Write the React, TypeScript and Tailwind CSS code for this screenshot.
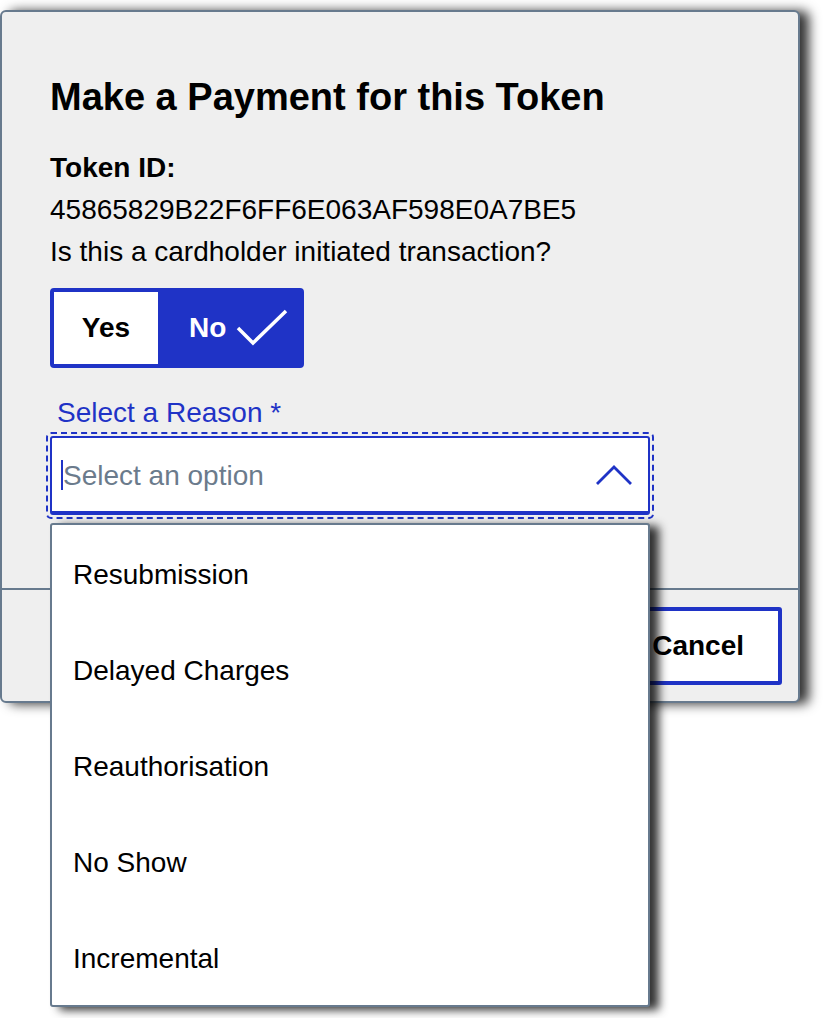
const reasons = ['Resubmission', 'Delayed Charges', 'Reauthorisation', 'No Show', 'Incremental']

const Check = () => (
  <svg width="52" height="38" viewBox="0 0 52 38" fill="none" className="ml-[10px]">
    <path d="M2 19 L17 34 L50 2" stroke="white" strokeWidth="3.5" />
  </svg>
)

const ChevronUp = () => (
  <svg width="38" height="22" viewBox="0 0 38 22" fill="none">
    <path d="M2 20 L19 3 L36 20" stroke="#1f33c6" strokeWidth="2.8" />
  </svg>
)

export default function App() {
  return (
    <div className="min-h-screen bg-white font-['Liberation_Sans',Arial,sans-serif] text-black">
      <div className="pt-[10px] w-[800px]">
        <div className="relative rounded-[6px] border-2 border-[#677a8e] bg-[#efefef] shadow-[9px_1px_12px_rgba(0,0,0,0.8)]">
          <div className="px-[48px] pt-[63px] pb-[69px]">
            <h2 className="text-[38px] font-bold leading-[44px]">Make a Payment for this Token</h2>
            <p className="mt-[28px] text-[28px] font-bold leading-[42px]">Token ID:</p>
            <p className="text-[28px] leading-[42px]">45865829B22F6FF6E063AF598E0A7BE5</p>
            <p className="text-[28px] leading-[42px]">Is this a cardholder initiated transaction?</p>

            <div className="mt-[15px] flex w-[254px] h-[80px] rounded-[4px] border-4 border-[#1f33c6] bg-[#1f33c6]">
              <button className="w-[104px] bg-white text-[28px] font-bold">Yes</button>
              <button className="flex flex-1 items-center pl-[31px] text-[28px] font-bold text-white">
                No
                <Check />
              </button>
            </div>

            <label className="mt-[29px] ml-[7px] block text-[28px] leading-[32px] text-[#1f33c6]">Select a Reason *</label>
            <div className="relative mt-[3px] w-[608px] -ml-[4px] rounded-[5px] border-2 border-dashed border-[#1f33c6] p-[2px]">
              <div className="flex h-[79px] items-center rounded-[3px] border-2 border-b-4 border-[#1f33c6] bg-white pl-[9px] pr-[15px]">
                <span className="h-[30px] w-[2px] bg-[#1f33c6]" />
                <span className="flex-1 pt-[3px] text-[28px] text-[#6b7b8c]">Select an option</span>
                <ChevronUp />
              </div>
              <ul className="absolute left-[2px] top-[calc(100%+6px)] z-10 w-[600px] rounded-[3px] border-2 border-[#677a8e] bg-white shadow-[9px_3px_10px_rgba(0,0,0,0.8)]">
                {reasons.map((r) => (
                  <li key={r} className="flex h-[96px] items-center pl-[21px] pt-[3px] text-[28px]">{r}</li>
                ))}
              </ul>
            </div>
          </div>
          <div className="flex justify-end border-t-2 border-[#677a8e] px-[16px] pt-[17px] pb-[16px]">
            <button className="h-[78px] rounded-[3px] border-4 border-[#1f33c6] bg-white px-[34px] text-[28px] font-bold">Cancel</button>
          </div>
        </div>
      </div>
    </div>
  )
}
